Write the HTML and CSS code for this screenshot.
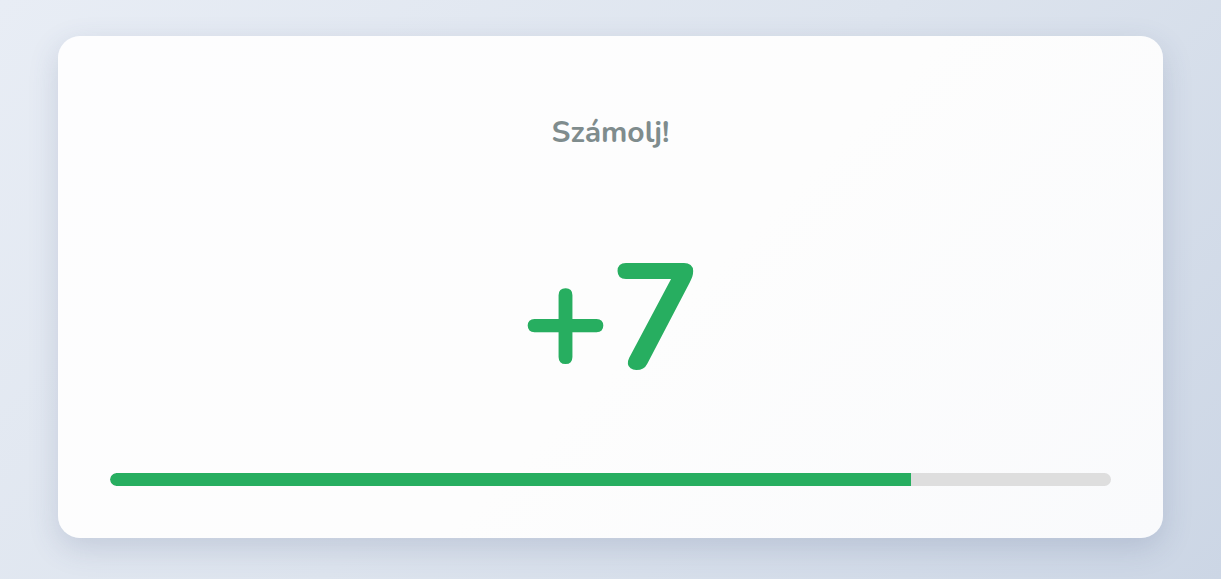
FILE: index.html
```html
<!DOCTYPE html>
<html lang="hu">
<head>
<meta charset="utf-8">
<title>Számolj!</title>
<link rel="stylesheet" href="styles.css">
</head>
<body>
  <main class="card">
    <h1 class="title">Számolj!</h1>
    <div class="number">+7</div>
    <div class="progress"><div class="progress-fill" style="width: 80%"></div></div>
  </main>
</body>
</html>
```

FILE: styles.css
```css
html, body {
  margin: 0;
  padding: 0;
}
body {
  height: 579px;
  box-sizing: border-box;
  padding: 36px 58px 41px;
  background: linear-gradient(135deg, #e8edf5 0%, #dde4ee 50%, #ccd6e5 100%);
  font-family: "Nunito", "Lato", "Noto Sans", sans-serif;
  overflow: hidden;
}
.card {
  height: 502px;
  box-sizing: border-box;
  padding: 52px;
  border-radius: 22px;
  background: linear-gradient(135deg, #fdfdfe 0%, #fdfdfd 55%, #f9fafc 100%);
  box-shadow: 0 10px 30px rgba(60, 80, 120, 0.18);
  display: flex;
  flex-direction: column;
  align-items: stretch;
}
.title {
  margin: 27px 0 0;
  text-align: center;
  font-size: 30px;
  line-height: 36px;
  font-weight: 700;
  color: #7f8c8d;
}
.number {
  flex: 1;
  display: flex;
  align-items: center;
  justify-content: center;
  font-size: 150px;
  line-height: 1;
  font-weight: 700;
  color: #27ae60;
  padding-top: 16px;
}
.progress {
  height: 13px;
  border-radius: 7px;
  background: #dedede;
  overflow: hidden;
}
.progress-fill {
  height: 100%;
  background: #27ae60;
  border-radius: 7px 0 0 7px;
}
```
